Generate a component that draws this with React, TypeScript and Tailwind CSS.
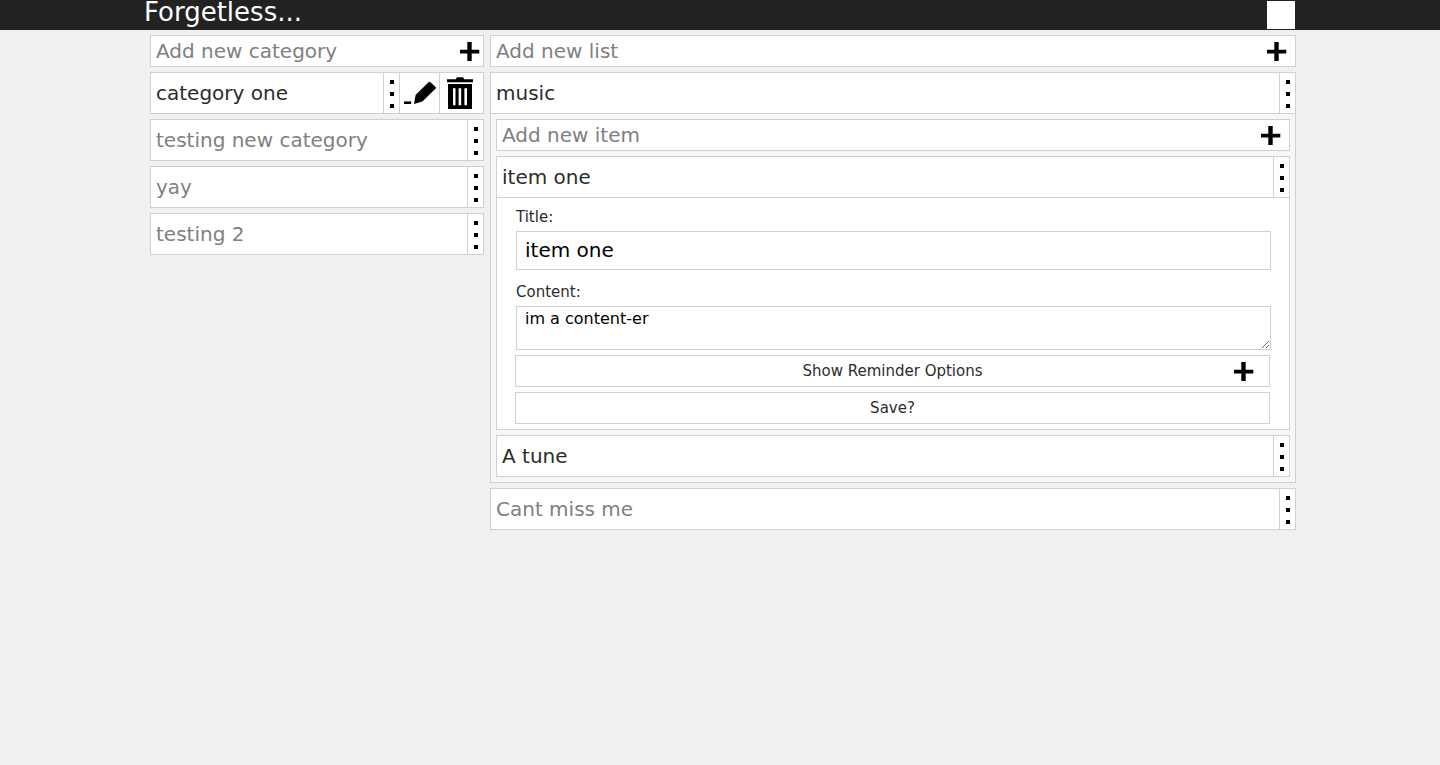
import { useState } from "react";

function PlusIcon() {
  return (
    <svg viewBox="0 0 20 20" className="h-5 w-5 shrink-0" aria-hidden="true">
      <path d="M7.3 1h4.4v7.7h7.6v3.7h-7.6V20H7.3v-7.6H0V8.7h7.3z" fill="#000" />
    </svg>
  );
}

function PencilIcon() {
  return (
    <svg viewBox="0 0 39 40" className="h-10 w-[39px]" aria-hidden="true">
      <path d="M4 28.4h7.2V31H4z" fill="#000" />
      <path d="M14 31l1.6-9L29 8.8l1.2.1 5.6 5.4-.1 1.2L22.4 28.6z" fill="#000" />
    </svg>
  );
}

function TrashIcon() {
  return (
    <svg viewBox="0 0 39 40" className="h-10 w-[39px]" aria-hidden="true">
      <path
        fillRule="evenodd"
        fill="#000"
        d="M7 6.3h8.6L17 4.2h6l1.4 2.1H33v2.9H7zM8 11h24v25H8zM13 15.2v17h2.5v-17zM18.6 15.2v17h2.6v-17zM24.4 15.2v17H27v-17z"
      />
    </svg>
  );
}

function MenuButton({ name }: { name: string }) {
  return (
    <button
      type="button"
      aria-label={`Options for ${name}`}
      className="flex w-4 shrink-0 flex-col items-start gap-2 border-l border-[#d0d0d0] pt-[7px] pl-[6px]"
    >
      <span className="size-1 bg-black" />
      <span className="size-1 bg-black" />
      <span className="size-1 bg-black" />
    </button>
  );
}

function AddRow({ label, wide }: { label: string; wide?: boolean }) {
  return (
    <form
      onSubmit={(e) => e.preventDefault()}
      className={`flex h-8 items-center border border-[#d0d0d0] bg-white pl-[5px] ${wide ? "pr-2" : "pr-[3px]"}`}
    >
      <input
        aria-label={label}
        placeholder={label}
        className="min-w-0 flex-1 text-[20px] leading-6 text-[#2c2c2c] outline-none placeholder:text-[#808080]"
      />
      <button type="submit" aria-label={label}>
        <PlusIcon />
      </button>
    </form>
  );
}

function TitleRow({ title, active, editing }: { title: string; active?: boolean; editing?: boolean }) {
  return (
    <div className="flex h-10 bg-white">
      <button
        type="button"
        className={`min-w-0 flex-1 truncate pl-[5px] text-left text-[20px] leading-6 ${active ? "text-[#2c2c2c]" : "text-[#808080]"}`}
      >
        {title}
      </button>
      <MenuButton name={title} />
      {editing && (
        <>
          <button type="button" aria-label={`Edit ${title}`} className="border-l border-[#d0d0d0]">
            <PencilIcon />
          </button>
          <button type="button" aria-label={`Delete ${title}`} className="border-l border-[#d0d0d0] pr-1">
            <TrashIcon />
          </button>
        </>
      )}
    </div>
  );
}

function ItemForm() {
  const [title, setTitle] = useState("item one");
  const [content, setContent] = useState("im a content-er");
  return (
    <form
      onSubmit={(e) => e.preventDefault()}
      className="border-t border-[#d0d0d0] bg-white pt-[9px] pb-[5px] text-[15px] leading-5 text-[#2c2c2c]"
    >
      <div className="flex flex-col pr-[18px] pl-[19px]">
        <label htmlFor="item-title">Title:</label>
        <input
          id="item-title"
          value={title}
          onChange={(e) => setTitle(e.target.value)}
          className="mt-1 h-[39px] border border-[#d0d0d0] px-2 pb-[2px] text-[20px] leading-6 text-black outline-none"
        />
        <label htmlFor="item-content" className="mt-3">
          Content:
        </label>
        <textarea
          id="item-content"
          value={content}
          onChange={(e) => setContent(e.target.value)}
          className="mt-1 h-11 resize border border-[#d0d0d0] px-2 py-[2px] text-[16px] leading-[19px] text-black outline-none"
        />
      </div>
      <div className="mt-[5px] flex flex-col gap-[5px] pr-[19px] pl-[18px]">
        <button type="button" className="grid h-8 grid-cols-[1fr_auto_1fr] items-center border border-[#d0d0d0] px-[15px]">
          <span className="col-start-2">Show Reminder Options</span>
          <span className="justify-self-end">
            <PlusIcon />
          </span>
        </button>
        <button type="submit" className="h-8 border border-[#d0d0d0]">
          Save?
        </button>
      </div>
    </form>
  );
}

export default function App() {
  return (
    <div className="min-h-screen bg-[#f0f0f0] font-['DejaVu_Sans',sans-serif]">
      <header className="bg-[#222222]">
        <div className="mx-auto flex h-[30px] w-4/5 items-start justify-between">
          <h1 className="text-[26px] leading-6 text-white">Forgetless...</h1>
          <button type="button" aria-label="Menu" className="m-px size-7 bg-white" />
        </div>
      </header>
      <main className="mx-auto grid w-4/5 grid-cols-[334fr_806fr] items-start gap-[6px] pt-[5px] pl-[6px]">
        <section className="flex flex-col gap-[5px]" aria-label="Categories">
          <AddRow label="Add new category" />
          <div className="border border-[#d0d0d0]">
            <TitleRow title="category one" active editing />
          </div>
          {["testing new category", "yay", "testing 2"].map((name) => (
            <div key={name} className="border border-[#d0d0d0]">
              <TitleRow title={name} />
            </div>
          ))}
        </section>
        <section className="flex flex-col gap-[5px]" aria-label="Lists">
          <AddRow label="Add new list" wide />
          <div className="border border-[#d0d0d0]">
            <TitleRow title="music" active />
            <div className="flex flex-col gap-[5px] border-t border-[#d0d0d0] bg-[#f7f7f7] p-[5px]">
              <AddRow label="Add new item" wide />
              <div className="border border-[#d0d0d0]">
                <TitleRow title="item one" active />
                <ItemForm />
              </div>
              <div className="border border-[#d0d0d0]">
                <TitleRow title="A tune" active />
              </div>
            </div>
          </div>
          <div className="border border-[#d0d0d0]">
            <TitleRow title="Cant miss me" />
          </div>
        </section>
      </main>
    </div>
  );
}
